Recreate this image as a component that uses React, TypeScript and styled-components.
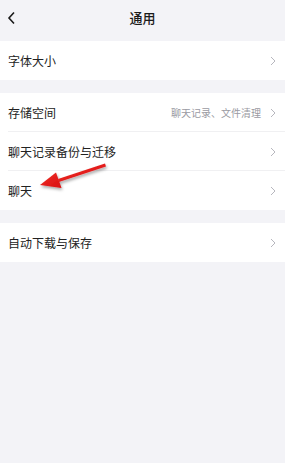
import styled, { createGlobalStyle } from 'styled-components';

const GlobalStyle = createGlobalStyle`
  html, body {
    margin: 0;
    padding: 0;
    background: #f3f3f7;
  }
  body {
    font-family: "Noto Sans CJK SC", "Noto Sans", sans-serif;
    color: #1f1f1f;
  }
`;

const Page = styled.div`
  position: relative;
  width: 285px;
  min-height: 463px;
  background: #f3f3f7;
`;

const Header = styled.div`
  position: relative;
  height: 41px;
  display: flex;
  align-items: center;
  justify-content: center;
`;

const BackButton = styled.div`
  position: absolute;
  left: 7px;
  top: 11px;
  width: 10px;
  height: 14px;
  display: flex;
`;

const Title = styled.div`
  font-size: 13px;
  font-weight: 500;
  color: #1a1a1a;
  margin-top: -6px;
`;

const Card = styled.div`
  background: #fff;
  margin-bottom: 13px;
`;

const Row = styled.div<{ $divider?: boolean }>`
  height: 39px;
  display: flex;
  align-items: center;
  padding: 0 9px 0 8px;
  position: relative;
  ${(p) =>
    p.$divider &&
    `
    &::after {
      content: '';
      position: absolute;
      left: 8px;
      right: 0;
      bottom: 0;
      height: 1px;
      background: #f0f0f2;
    }
  `}
`;

const Label = styled.span`
  flex: 1;
  font-size: 12px;
  color: #222;
`;

const Hint = styled.span`
  font-size: 10px;
  color: #9a9aa2;
  margin-right: 9px;
`;

const Chevron = () => (
  <svg width="6" height="10" viewBox="0 0 6 10">
    <path d="M1 1 L5 5 L1 9" fill="none" stroke="#b7b7be" strokeWidth="1" />
  </svg>
);

const Overlay = styled.svg`
  position: absolute;
  left: 0;
  top: 0;
  pointer-events: none;
`;

type Item = { label: string; hint?: string };

const groups: Item[][] = [
  [{ label: '字体大小' }],
  [
    { label: '存储空间', hint: '聊天记录、文件清理' },
    { label: '聊天记录备份与迁移' },
    { label: '聊天' },
  ],
  [{ label: '自动下载与保存' }],
];

export default function App() {
  return (
    <Page>
      <GlobalStyle />
      <Header>
        <BackButton>
          <svg width="10" height="14" viewBox="0 0 10 14">
            <path d="M7 1.5 L2 7 L7 12.5" fill="none" stroke="#1a1a1a" strokeWidth="1.6" />
          </svg>
        </BackButton>
        <Title>通用</Title>
      </Header>
      {groups.map((g, gi) => (
        <Card key={gi}>
          {g.map((item, i) => (
            <Row key={item.label} $divider={i < g.length - 1}>
              <Label>{item.label}</Label>
              {item.hint && <Hint>{item.hint}</Hint>}
              <Chevron />
            </Row>
          ))}
        </Card>
      ))}
      <Overlay width="285" height="463" viewBox="0 0 285 463">
        <defs>
          <filter id="sh" x="-20%" y="-50%" width="140%" height="200%">
            <feDropShadow dx="1" dy="2" stdDeviation="1.5" floodColor="#000" floodOpacity="0.35" />
          </filter>
          <linearGradient id="rg" x1="0" y1="0" x2="1" y2="1">
            <stop offset="0" stopColor="#f0302a" />
            <stop offset="1" stopColor="#d80e10" />
          </linearGradient>
        </defs>
        <g filter="url(#sh)">
          <path d="M105 163.5 L106 166.5 L59 182 L58 179 Z" fill="url(#rg)" />
          <path d="M40 185 L56 172.5 L61.5 188 Z" fill="url(#rg)" />
        </g>
      </Overlay>
    </Page>
  );
}
